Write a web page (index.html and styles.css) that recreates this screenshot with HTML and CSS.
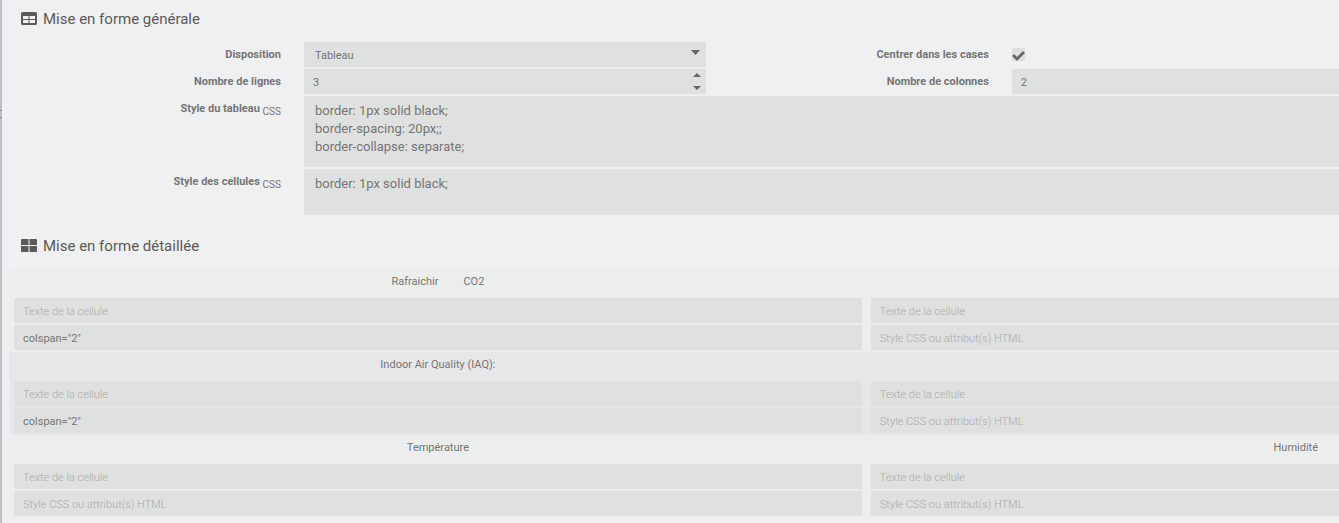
FILE: index.html
```html
<!DOCTYPE html>
<html lang="fr">
<head>
<meta charset="utf-8">
<title>Mise en forme</title>
<link rel="stylesheet" href="styles.css">
</head>
<body>
<div class="resizer"><span class="grip"></span></div>
<main class="panel">
  <div class="content">
    <h2 class="title">
      <svg class="title-icon" viewBox="0 0 16 14" aria-hidden="true"><path fill="#5c5a59" fill-rule="evenodd" d="M1.500 0h13A1.500 1.500 0 0 1 16 1.500v10a1.500 1.500 0 0 1-1.500 1.500h-13A1.500 1.500 0 0 1 0 11.500V1.500A1.500 1.500 0 0 1 1.500 0zM2 4v3h5.500V4zm6.500 0v3H14V4zM2 8v3h5.500V8zm6.500 0v3H14V8z"/></svg>
      Mise en forme générale
    </h2>
    <form class="form">
      <label class="label" for="disposition">Disposition</label>
      <div class="control">
        <select class="field select" id="disposition"><option>Tableau</option></select>
        <svg class="caret" viewBox="0 0 9 5" aria-hidden="true"><path fill="#666" d="M0 0h9L4.500 5z"/></svg>
      </div>
      <label class="label" for="center">Centrer dans les cases</label>
      <div class="control check">
        <input class="checkbox" type="checkbox" id="center" checked>
        <svg class="tick" viewBox="0 0 14 13" aria-hidden="true"><path fill="none" stroke="#666" stroke-width="2.800" d="M1 6L5 10L12 3"/></svg>
      </div>

      <label class="label first" for="rows">Nombre de lignes</label>
      <div class="control">
        <input class="field number" type="number" id="rows" value="3">
        <svg class="spinner" viewBox="0 0 8 17" aria-hidden="true"><path fill="#666" d="M0 4h8L4 0zM0 13h8L4 17z"/></svg>
      </div>
      <label class="label" for="cols">Nombre de colonnes</label>
      <div class="control"><input class="field number" type="number" id="cols" value="2"></div>

      <label class="label first" for="table-style">Style du tableau <sub class="hint">CSS</sub></label>
      <textarea class="field area" id="table-style" rows="3">border: 1px solid black;
border-spacing: 20px;;
border-collapse: separate;</textarea>

      <label class="label first" for="cell-style">Style des cellules <sub class="hint">CSS</sub></label>
      <textarea class="field area short" id="cell-style" rows="2">border: 1px solid black;</textarea>
    </form>

    <h2 class="title detail">
      <svg class="title-icon" viewBox="0 0 16 14" aria-hidden="true"><path fill="#5c5a59" d="M1 0h6.500v6H0V1a1 1 0 0 1 1-1zM8.500 0H15a1 1 0 0 1 1 1v5H8.500zM0 7h7.500v6H1a1 1 0 0 1-1-1zM8.500 7H16v5a1 1 0 0 1-1 1H8.500z"/></svg>
      Mise en forme détaillée
    </h2>
    <table class="cells">
      <tbody>
        <tr class="row">
          <td class="cell">
            <div class="names"><span>Rafraichir</span><span>CO2</span></div>
            <input class="field" type="text" aria-label="Texte de la cellule" placeholder="Texte de la cellule">
            <input class="field" type="text" aria-label="Style CSS ou attribut(s) HTML" value='colspan="2"'>
          </td>
          <td class="cell">
            <div class="names"></div>
            <input class="field" type="text" aria-label="Texte de la cellule" placeholder="Texte de la cellule">
            <input class="field" type="text" aria-label="Style CSS ou attribut(s) HTML" placeholder="Style CSS ou attribut(s) HTML">
          </td>
        </tr>
        <tr class="row">
          <td class="cell">
            <div class="names"><span>Indoor Air Quality (IAQ):</span></div>
            <input class="field" type="text" aria-label="Texte de la cellule" placeholder="Texte de la cellule">
            <input class="field" type="text" aria-label="Style CSS ou attribut(s) HTML" value='colspan="2"'>
          </td>
          <td class="cell">
            <div class="names"></div>
            <input class="field" type="text" aria-label="Texte de la cellule" placeholder="Texte de la cellule">
            <input class="field" type="text" aria-label="Style CSS ou attribut(s) HTML" placeholder="Style CSS ou attribut(s) HTML">
          </td>
        </tr>
        <tr class="row">
          <td class="cell">
            <div class="names"><span>Température</span></div>
            <input class="field" type="text" aria-label="Texte de la cellule" placeholder="Texte de la cellule">
            <input class="field" type="text" aria-label="Style CSS ou attribut(s) HTML" placeholder="Style CSS ou attribut(s) HTML">
          </td>
          <td class="cell">
            <div class="names"><span>Humidité</span></div>
            <input class="field" type="text" aria-label="Texte de la cellule" placeholder="Texte de la cellule">
            <input class="field" type="text" aria-label="Style CSS ou attribut(s) HTML" placeholder="Style CSS ou attribut(s) HTML">
          </td>
        </tr>
      </tbody>
    </table>
  </div>
</main>
</body>
</html>
```
FILE: styles.css
```css
* { box-sizing: border-box; }

body {
  margin: 0;
  min-height: 100vh;
  display: flex;
  overflow: hidden;
  background: #eff0f2;
  color: #757575;
  font: 11px/16px Roboto, sans-serif;
}

.resizer {
  width: 2px;
  flex: none;
  padding-top: 110px;
  background: #bfbfc3;
}

.grip {
  display: block;
  height: 8px;
  border: solid #8c8c8c;
  border-width: 1px 0;
}

.panel {
  flex: 1;
  min-width: 0;
  padding-left: 7px;
  overflow: hidden;
}

/* The two-column content is wider than the visible panel. */
.content { width: 129%; }

.title {
  display: flex;
  align-items: center;
  gap: 6px;
  margin: 0;
  padding: 8px 0 12px 12px;
  color: #5c5a59;
  font-size: 15px;
  font-weight: 400;
  line-height: 22px;
}

.title-icon {
  width: 16px;
  height: 14px;
}

.detail { padding: 20px 0 12px 12px; }

.form {
  display: grid;
  grid-template-columns: 272fr 402fr 260fr 402fr 288fr;
  column-gap: 23px;
  row-gap: 2px;
}

.label {
  padding-top: 5px;
  text-align: right;
  font-weight: 700;
}

.first { grid-column: 1; }

.hint {
  font-size: 10px;
  font-weight: 400;
  line-height: 1;
}

.control {
  position: relative;
  height: 25px;
}

.field {
  display: block;
  width: 100%;
  height: 25px;
  margin: 0;
  padding: 1px 9px 0;
  border: 0;
  border-radius: 0;
  outline: 0;
  background: #dfe1e0;
  color: #757575;
  font: 11px/16px Roboto, sans-serif;
  appearance: none;
}

.field::placeholder {
  color: #aaa;
  font-weight: 300;
  opacity: 1;
}

.select { padding: 2px 11px 0; }

.number { appearance: textfield; }

.caret {
  position: absolute;
  top: 8px;
  right: 6px;
  width: 9px;
  height: 5px;
}

.spinner {
  position: absolute;
  top: 4px;
  right: 5px;
  width: 8px;
  height: 17px;
}

.check { padding-top: 6px; }

.checkbox {
  display: block;
  width: 13px;
  height: 13px;
  margin: 0;
  background: #dfe1e0;
  appearance: none;
}

.tick {
  position: absolute;
  top: 7px;
  left: 0;
  width: 14px;
  height: 13px;
  pointer-events: none;
}

.area {
  grid-column: 2 / -1;
  height: 71px;
  padding: 6px 11px;
  font-size: 13px;
  line-height: 18px;
  resize: none;
  overflow: hidden;
}

.short { height: 46px; }

.cells {
  width: 100%;
  table-layout: fixed;
  border-collapse: collapse;
}

.row { background: #eceeed; }
.row:nth-child(even) { background: #e7e7e9; }

.cell { padding: 0 4px 2px; }
.cell:first-child { padding: 0 5px 2px; }

.field + .field { margin-top: 2px; }

.names {
  display: flex;
  justify-content: center;
  gap: 25px;
  height: 29px;
  padding-top: 5px;
}
```
